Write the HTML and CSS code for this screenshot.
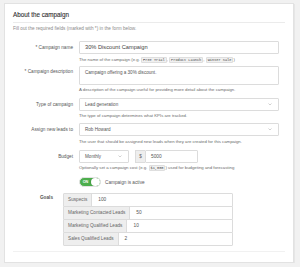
FILE: index.html
```html
<!DOCTYPE html>
<html>
<head>
<meta charset="utf-8">
<link rel="stylesheet" href="styles.css">
</head>
<body>
<div class="panel">
  <div class="panel-head">About the campaign</div>
  <p class="intro">Fill out the required fields (marked with *) in the form below.</p>

  <div class="row row-name">
    <label class="lbl">* Campaign name</label>
    <div class="ctl">
      <div class="input input-lg">30% Discount Campaign</div>
      <div class="help">The name of the campaign (e.g. <code>Free Trial</code>, <code>Product Launch</code>, <code>Winter Sale</code>)</div>
    </div>
  </div>

  <div class="row row-desc">
    <label class="lbl">* Campaign description</label>
    <div class="ctl">
      <div class="input textarea">Campaign offering a 30% discount.</div>
      <div class="help">A description of the campaign useful for providing more detail about the campaign.</div>
    </div>
  </div>

  <div class="row row-type">
    <label class="lbl">Type of campaign</label>
    <div class="ctl">
      <div class="input select"><span>Lead generation</span><svg class="chev" viewBox="0 0 8 5"><path d="M1 1l3 3 3-3" fill="none" stroke="#999" stroke-width="0.9"/></svg></div>
      <div class="help">The type of campaign determines what KPIs are tracked.</div>
    </div>
  </div>

  <div class="row row-assign">
    <label class="lbl">Assign new leads to</label>
    <div class="ctl">
      <div class="input select"><span>Rob Howard</span><svg class="chev" viewBox="0 0 8 5"><path d="M1 1l3 3 3-3" fill="none" stroke="#999" stroke-width="0.9"/></svg></div>
      <div class="help">The user that should be assigned new leads when they are created for this campaign.</div>
    </div>
  </div>

  <div class="row row-budget">
    <label class="lbl">Budget</label>
    <div class="ctl">
      <div class="budget">
        <div class="input select small"><span>Monthly</span><svg class="chev" viewBox="0 0 8 5"><path d="M1 1l3 3 3-3" fill="none" stroke="#999" stroke-width="0.9"/></svg></div>
        <div class="group">
          <span class="addon">$</span>
          <div class="input grp-input">5000</div>
        </div>
      </div>
      <div class="help">Optionally set a campaign cost (e.g. <code>$1,000</code>) used for budgeting and forecasting</div>
    </div>
  </div>

  <div class="row row-toggle">
    <span class="lbl"></span>
    <div class="ctl toggle-line">
      <span class="toggle"><span class="on">ON</span><span class="knob"></span></span>
      <span class="toggle-text">Campaign is active</span>
    </div>
  </div>

  <div class="row row-goals">
    <label class="lbl goals-lbl">Goals</label>
    <div class="goals">
      <div class="goal"><span class="addon">Suspects</span><span class="gval">100</span></div>
      <div class="goal"><span class="addon">Marketing Contacted Leads</span><span class="gval">50</span></div>
      <div class="goal"><span class="addon">Marketing Qualified Leads</span><span class="gval">10</span></div>
      <div class="goal"><span class="addon">Sales Qualified Leads</span><span class="gval">2</span></div>
    </div>
  </div>

  <div class="footer-line"></div>
</div>
</body>
</html>
```
FILE: styles.css
```css
html, body {
  margin: 0;
  padding: 0;
  background: #f1f1f1;
  font-family: "Liberation Sans", Arial, sans-serif;
  color: #555;
}
.panel {
  box-sizing: border-box;
  width: 290px;
  height: 260px;
  margin: 3px 0 0 4px;
  background: #fff;
  border: 1px solid #e2e2e2;
  box-shadow: 1px 1px 0 #e6e6e6;
  padding: 0 8px 0 8px;
}
.panel-head {
  margin-top: 6px;
  height: 10px;
  line-height: 10px;
  font-size: 6.3px;
  color: #333;
  font-weight: 400;
  padding-bottom: 2px;
  border-bottom: 1px solid #ebebeb;
  -webkit-text-stroke: 0.12px #333;
}
.intro {
  margin: 3px 0 0 0;
  height: 6px;
  line-height: 6px;
  font-size: 4.7px;
  color: #8a8a8a;
  white-space: nowrap;
}
.row {
  display: flex;
  align-items: flex-start;
}
.lbl {
  flex: 0 0 60px;
  width: 60px;
  text-align: right;
  font-size: 4.7px;
  color: #555;
  margin-right: 6px;
  line-height: 13px;
  white-space: nowrap;
}
.ctl {
  width: 200px;
}
.input {
  box-sizing: border-box;
  height: 13px;
  border: 1px solid #dcdcdc;
  border-radius: 1px;
  background: #fff;
  font-size: 4.6px;
  color: #555;
  line-height: 11px;
  padding: 0 5px;
  white-space: nowrap;
}
.input-lg {
  font-size: 5.7px;
  color: #444;
}
.textarea {
  height: 19px;
  line-height: 10px;
  padding-top: 0.5px;
  font-size: 4.6px;
}
.select {
  display: flex;
  align-items: center;
  justify-content: space-between;
}
.chev {
  width: 4px;
  height: 2.5px;
  margin-right: 1px;
}
.help {
  font-size: 4.3px;
  color: #6a6a6a;
  line-height: 5px;
  height: 5px;
  margin-top: 3px;
  white-space: nowrap;
}
code {
  font-family: "Liberation Mono", monospace;
  font-size: 3.6px;
  background: #f0f0f0;
  border: 0.5px solid #dedede;
  padding: 0 1px;
  color: #444;
  border-radius: 1px;
}
.row-name { margin-top: 9px; }
.row-desc { margin-top: 4px; }
.row-desc .lbl { line-height: 12px; }
.row-desc .help { margin-top: 2px; }
.row-type { margin-top: 6px; }
.row-type .help { margin-top: 2px; }
.row-assign { margin-top: 5px; }
.row-budget { margin-top: 6px; }
.row-budget .help { margin-top: 2px; }
.budget {
  display: flex;
  align-items: center;
}
.small {
  width: 50px;
}
.group {
  display: flex;
  margin-left: 6px;
}
.addon {
  box-sizing: border-box;
  background: #eeeeee;
  border: 1px solid #dcdcdc;
  font-size: 4.7px;
  color: #666;
  height: 13px;
  line-height: 11px;
  padding: 0 3px;
  white-space: nowrap;
}
.group .addon {
  width: 10px;
  padding: 0;
  text-align: center;
  border-right: 0;
}
.grp-input {
  width: 53px;
  font-size: 4.8px;
}
.row-toggle { margin-top: 7px; }
.toggle-line {
  display: flex;
  align-items: center;
  height: 10px;
}
.toggle {
  display: flex;
  align-items: center;
  box-sizing: border-box;
  width: 22px;
  height: 10px;
  border-radius: 5px;
  background: #4cae4c;
  border: 1px solid #e3e3e3;
  overflow: hidden;
}
.on {
  flex: 1;
  font-size: 3.8px;
  color: #fff;
  text-align: center;
  font-weight: bold;
}
.knob {
  width: 9px;
  height: 8px;
  border-radius: 4px;
  background: #fff;
  box-shadow: -0.5px 0 1px rgba(0,0,0,0.2);
}
.toggle-text {
  font-size: 4.7px;
  color: #555;
  margin-left: 4px;
}
.row-goals { margin-top: 6px; }
.goals-lbl {
  flex: 0 0 40px;
  width: 40px;
  margin-right: 10px;
  line-height: 9px;
  font-weight: bold;
  color: #555;
}
.goals {
  width: 170px;
  display: flex;
  flex-direction: column;
}
.goal {
  display: flex;
  box-sizing: border-box;
  height: 14px;
  margin-top: -1px;
  border: 1px solid #dcdcdc;
  border-radius: 1px;
}
.goal:first-child { margin-top: 0; }
.goal .addon {
  border: 0;
  border-right: 1px solid #dcdcdc;
  height: 12px;
  line-height: 12px;
  padding: 0 4px;
}
.gval {
  font-size: 4.8px;
  line-height: 12px;
  color: #555;
  padding-left: 6px;
}
.footer-line {
  margin-top: 5px;
  border-top: 1px solid #f1f1f1;
}
```
